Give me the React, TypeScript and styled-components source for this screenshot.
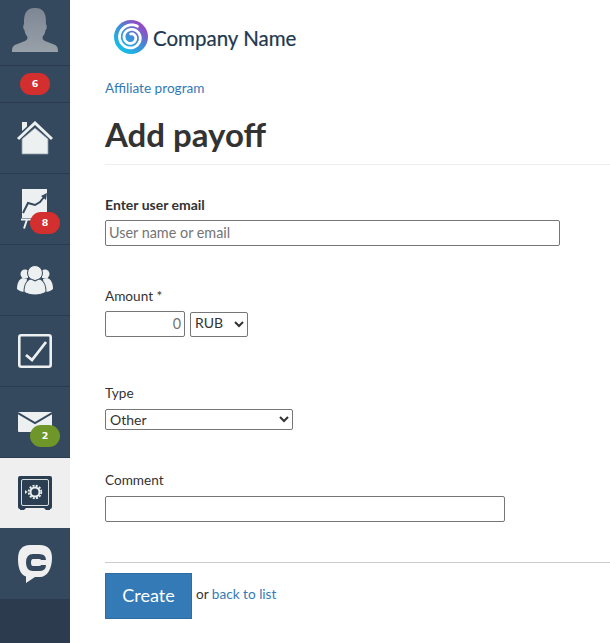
import React from "react";
import styled, { createGlobalStyle } from "styled-components";

const Global = createGlobalStyle`
  html, body { margin: 0; padding: 0; background: #fff; }
  body { font-family: "Lato", "Liberation Sans", sans-serif; color: #333; font-size: 13.6px; }
  * { box-sizing: border-box; }
`;

const Page = styled.div`
  display: flex;
  width: 610px;
  height: 643px;
  overflow: hidden;
`;
const Sidebar = styled.nav`
  width: 70px;
  flex: none;
  background: #2c3b4d;
  display: flex;
  flex-direction: column;
  align-items: stretch;
`;
const NavItem = styled.div<{ $active?: boolean; $h?: number; $last?: boolean }>`
  position: relative;
  height: ${(p) => p.$h ?? 71}px;
  flex: none;
  display: flex;
  align-items: center;
  justify-content: center;
  background: ${(p) => (p.$active ? "#efefef" : "#34495e")};
  border-bottom: ${(p) => (p.$active || p.$last ? "0" : "1px solid #2c3b4d")};
`;
const Badge = styled.span<{ $green?: boolean; $over?: boolean }>`
  width: 30px;
  height: 22px;
  border-radius: 11px;
  background: ${(p) => (p.$green ? "#6f9628" : "#d32f2f")};
  color: #fff;
  font: 700 9.5px/22px "DejaVu Sans", sans-serif;
  text-align: center;
  ${(p) => (p.$over ? "position: absolute; left: 30px; top: 38px;" : "")}
`;
const Main = styled.main`
  flex: 1;
  min-width: 0;
  padding-left: 35px;
`;
const LogoRow = styled.div`
  height: 78px;
  padding: 20px 0 0 9px;
  display: flex;
  align-items: flex-start;
  gap: 5px;
`;
const LogoText = styled.span`
  font: 400 20.500px/36px "Lato", sans-serif;
  -webkit-text-stroke: 0.2px #22384f;
  color: #22384f;
  white-space: nowrap;
`;
const Crumb = styled.a`
  display: block;
  color: #337ab7;
  font-size: 13.6px;
  line-height: 20px;
  height: 20px;
`;
const Title = styled.h1`
  margin: 0;
  height: 67px;
  padding-top: 18px;
  font-size: 33px;
  line-height: 36px;
  font-weight: 700;
  color: #333;
  border-bottom: 1px solid #eee;
  white-space: nowrap;
`;
const Field = styled.div<{ $mt: number }>`
  margin-top: ${(p) => p.$mt}px;
`;
const Label = styled.label<{ $bold?: boolean; $h?: number }>`
  display: block;
  height: ${(p) => p.$h ?? 25}px;
  line-height: 20px;
  font-size: ${(p) => (p.$bold ? 14 : 13.6)}px;
  font-weight: ${(p) => (p.$bold ? 700 : 400)};
  color: #333;
`;
const TextInput = styled.input<{ $w: number; $h: number; $right?: boolean }>`
  display: block;
  width: ${(p) => p.$w}px;
  height: ${(p) => p.$h}px;
  padding: 0 3px 2px;
  border: 1px solid #767676;
  border-radius: 2px;
  font: 14.4px "Lato", sans-serif;
  color: #333;
  background: #fff;
  text-align: ${(p) => (p.$right ? "right" : "left")};
  &::placeholder { color: #757575; opacity: 1; }
`;
const Select = styled.select<{ $w: number; $h: number }>`
  display: block;
  width: ${(p) => p.$w}px;
  height: ${(p) => p.$h}px;
  padding-bottom: 3px;
  border: 1px solid #767676;
  border-radius: 2px;
  background: #fff;
  color: #333;
  font: 14px "Lato", sans-serif;
`;
const Inline = styled.div`
  display: flex;
  align-items: center;
  gap: 5px;
`;
const Actions = styled.div`
  margin-top: 40px;
  border-top: 1px solid #ccc;
  padding-top: 10px;
  display: flex;
  align-items: center;
  gap: 4px;
`;
const Button = styled.button`
  width: 87px;
  height: 46px;
  background: #337ab7;
  border: 1px solid #2e6da4;
  color: #fff;
  font: 18px "Lato", sans-serif;
  padding: 0 0 2px;
`;
const Or = styled.span`
  color: #333;
  margin-top: -5px;
`;
const BackLink = styled.a`
  color: #337ab7;
`;

const ICON = "#ecf0f1";
const NAV = "#34495e";

const Avatar = () => (
  <svg width="46" height="50" viewBox="0 0 46 50">
    <defs>
      <linearGradient id="av" x1="0" y1="0" x2="0" y2="1">
        <stop offset="0" stopColor="#7d8794" />
        <stop offset="1" stopColor="#98a0a9" />
      </linearGradient>
    </defs>
    <path d="M0 44c0-4 .5-6 4-7.500l9-3.500c2.500-1 3-3 2-5-1.500-1.500-2.300-4-2.500-6-1-.5-1.300-2-1.200-4 0-1 .3-1.500.8-1.500C11.500 6 14 0 23 0s11.500 6 10.900 16.500c.5 0 .8.500.8 1.500.1 2-.2 3.500-1.200 4-.2 2-1 4.500-2.500 6-1 2-.5 4 2 5l9 3.500c3.500 1.500 4 3.500 4 7.500z" fill="url(#av)" />
  </svg>
);
const Home = () => (
  <svg width="36" height="34" viewBox="0 0 36 34">
    <path d="M5 1h5v4.500l-5 4.500z" fill={ICON} />
    <path d="M5 33V18L18 7l13 11v15z" fill={ICON} stroke="#8d9aa6" strokeWidth=".8" />
    <path d="M1 18 18 2l17 16" fill="none" stroke={ICON} strokeWidth="3" />
  </svg>
);
const Chart = () => (
  <svg width="36" height="46" viewBox="0 0 36 46">
    <rect x="5" y="3" width="25" height="29" fill={ICON} />
    <path d="M6 27l5-10 7 2 5-3 4-5" fill="none" stroke={NAV} strokeWidth="2" />
    <path d="M24 10l6-3-1 7z" fill={NAV} />
    <path d="M4 33.500h10M10 33.500l-3 9" fill="none" stroke={ICON} strokeWidth="2" />
  </svg>
);
const Users = () => (
  <svg width="36" height="30" viewBox="0 0 36 30">
    <circle cx="8" cy="9" r="4.500" fill={ICON} />
    <circle cx="28" cy="9" r="4.500" fill={ICON} />
    <path d="M0 24c0-6 2-10 6-11l4 1-2 13c-3 0-6-1-8-3zM36 24c0-6-2-10-6-11l-4 1 2 13c3 0 6-1 8-3z" fill={ICON} />
    <circle cx="18" cy="8" r="7.500" fill={ICON} stroke={NAV} strokeWidth="1" />
    <path d="M7 27c0-8 3-12 7-13l4 2 4-2c4 1 7 5 7 13-3 2-7 3-11 3s-8-1-11-3z" fill={ICON} stroke={NAV} strokeWidth="1" />
  </svg>
);
const Check = () => (
  <svg width="34" height="34" viewBox="0 0 34 34">
    <rect x="1.300" y="1.300" width="31.400" height="31.400" rx="2" fill="none" stroke={ICON} strokeWidth="2.600" />
    <path d="M8 21l6 5L28 8" fill="none" stroke={ICON} strokeWidth="2.800" />
  </svg>
);
const Mail = () => (
  <svg width="34" height="20" viewBox="0 0 34 20">
    <rect width="34" height="20" rx="1" fill={ICON} />
    <path d="M0 1l17 10L34 1" fill="none" stroke={NAV} strokeWidth="2" />
  </svg>
);
const Safe = () => (
  <svg width="34" height="34" viewBox="0 0 34 34">
    <path d="M2 0h30a2 2 0 0 1 2 2v29a2 2 0 0 1-2 2v1h-4l-2-2H8l-2 2H2v-1a2 2 0 0 1-2-2V2a2 2 0 0 1 2-2z" fill="#2c3e52" />
    <rect x="3.500" y="3.500" width="27" height="26" rx="1.500" fill="none" stroke="#ecf0f1" strokeWidth=".9" />
    <circle cx="17" cy="16" r="6.300" fill="none" stroke="#ecf0f1" strokeWidth="1.800" strokeDasharray="2 1.300" />
    <circle cx="17" cy="16" r="4.500" fill="none" stroke="#ecf0f1" strokeWidth="2" />
    <path d="M7 14l2.500 2L7 18z" fill="#ecf0f1" />
  </svg>
);
const Chat = () => (
  <svg width="34" height="38" viewBox="0 0 34 38">
    <path d="M12 0h10c8 0 12 5 12 13 0 11-5 19-12 19h-5L8 38l0-6.500C3 30 0 24 0 14 0 5 4 0 12 0z" fill="#efefef" />
    <path d="M25.500 15Q25.500 11.500 21 11.500H15Q10.500 11.500 10.500 17.500T15 23.500H21Q25.500 23.500 25.500 20" fill="none" stroke={NAV} strokeWidth="5" />
  </svg>
);

const spiralPath = (() => {
  const pts: string[] = [];
  const turns = 2.1;
  const steps = 120;
  for (let i = 0; i <= steps; i++) {
    const t = i / steps;
    const a = (-60 - t * turns * 360) * (Math.PI / 180);
    const r = 13 - 9.500 * t;
    pts.push(`${(17 + r * Math.cos(a)).toFixed(2)} ${(17.5 + r * Math.sin(a)).toFixed(2)}`);
  }
  return "M" + pts.join("L");
})();

const Swirl = () => (
  <svg width="34" height="34" viewBox="0 0 34 34">
    <defs>
      <linearGradient id="sw" x1="0.150" y1="0.900" x2="0.850" y2="0.100">
        <stop offset="0" stopColor="#11c3e8" />
        <stop offset="0.500" stopColor="#3f8fd8" />
        <stop offset="1" stopColor="#a23fc0" />
      </linearGradient>
    </defs>
    <circle cx="17" cy="17" r="17" fill="url(#sw)" />
    <path d={spiralPath} fill="none" stroke="#fff" strokeWidth="2.800" strokeLinecap="round" />
  </svg>
);

export default function App() {
  return (
    <Page>
      <Global />
      <Sidebar>
        <NavItem $h={66}><Avatar /></NavItem>
        <NavItem $h={37}><Badge>6</Badge></NavItem>
        <NavItem><Home /></NavItem>
        <NavItem><Chart /><Badge $over>8</Badge></NavItem>
        <NavItem><Users /></NavItem>
        <NavItem><Check /></NavItem>
        <NavItem><Mail /><Badge $green $over>2</Badge></NavItem>
        <NavItem $active $h={70}><Safe /></NavItem>
        <NavItem $last><Chat /></NavItem>
      </Sidebar>
      <Main>
        <LogoRow>
          <Swirl />
          <LogoText>Company Name</LogoText>
        </LogoRow>
        <Crumb>Affiliate program</Crumb>
        <Title>Add payoff</Title>
        <Field $mt={30}>
          <Label $bold>Enter user email</Label>
          <TextInput $w={455} $h={26} placeholder="User name or email" />
        </Field>
        <Field $mt={40}>
          <Label>Amount *</Label>
          <Inline>
            <TextInput $w={80} $h={26} $right placeholder="0" />
            <Select $w={58} $h={25}><option>RUB</option></Select>
          </Inline>
        </Field>
        <Field $mt={46}>
          <Label $h={26}>Type</Label>
          <Select $w={188} $h={21}><option>Other</option></Select>
        </Field>
        <Field $mt={40}>
          <Label $h={26}>Comment</Label>
          <TextInput $w={400} $h={26} />
        </Field>
        <Actions>
          <Button>Create</Button>
          <Or>or <BackLink>back to list</BackLink></Or>
        </Actions>
      </Main>
    </Page>
  );
}
